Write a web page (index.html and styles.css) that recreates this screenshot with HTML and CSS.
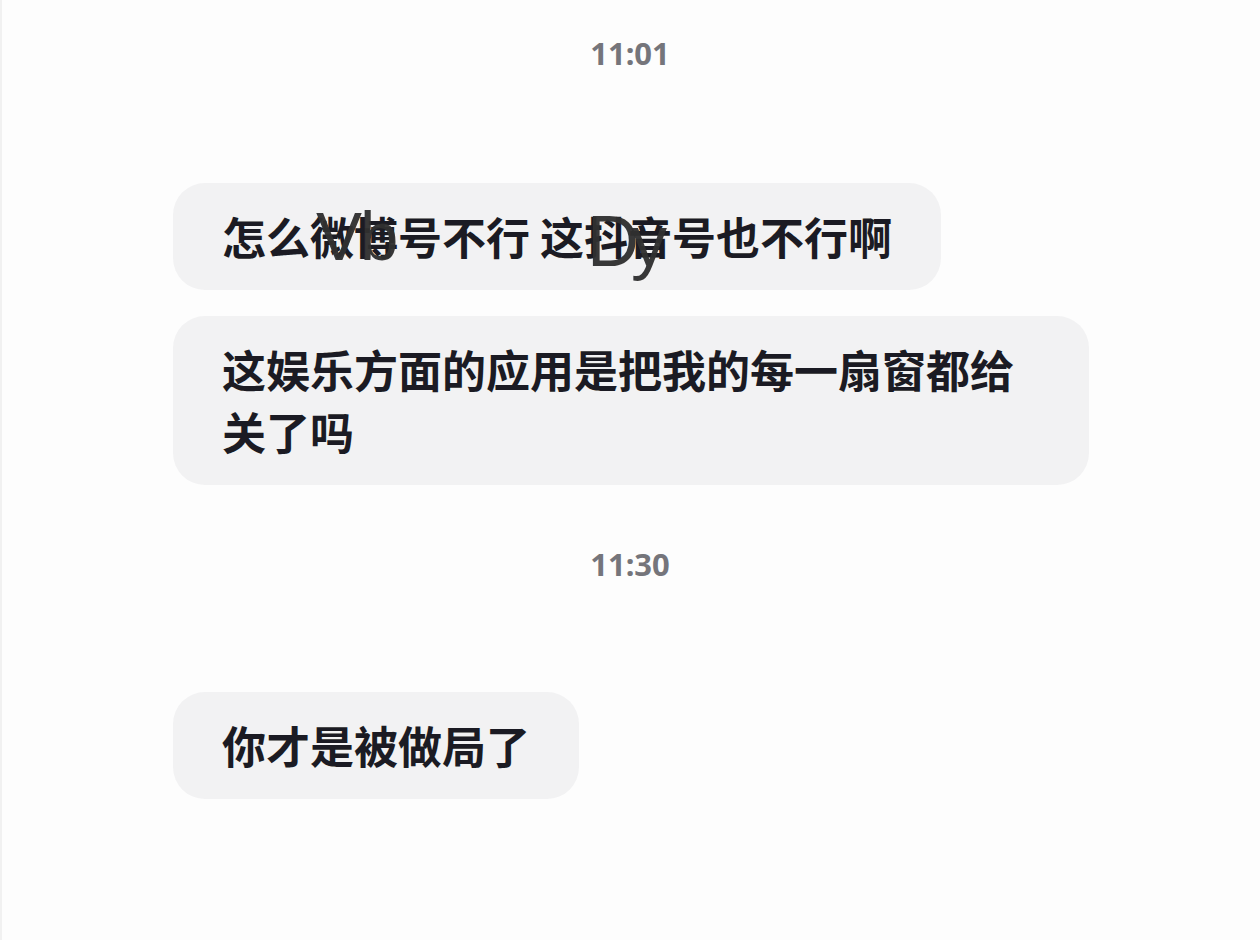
FILE: index.html
```html
<!DOCTYPE html>
<html lang="zh-CN">
<head>
<meta charset="utf-8">
<title>Chat</title>
<link rel="stylesheet" href="styles.css">
</head>
<body>
<div class="chat">
  <div class="time time-first">11:01</div>
  <div class="msgs">
    <div class="bubble overlay-host">怎么微博号不行 这抖音号也不行啊<span class="sticker sticker-vb">Vb</span><span class="sticker sticker-dy">Dy</span></div>
    <div class="bubble">这娱乐方面的应用是把我的每一扇窗都给关了吗</div>
  </div>
  <div class="time time-second">11:30</div>
  <div class="msgs msgs-last">
    <div class="bubble">你才是被做局了</div>
  </div>
</div>
</body>
</html>
```

FILE: styles.css
```css
html, body {
  margin: 0;
  padding: 0;
}
body {
  background: #fdfdfd;
  width: 1260px;
  height: 940px;
  overflow: hidden;
  border-left: 2px solid #f1f1f1;
  box-sizing: border-box;
}
.chat {
  display: flex;
  flex-direction: column;
}
.time {
  text-align: center;
  font-family: "Noto Sans", "Open Sans", sans-serif;
  font-weight: 700;
  font-size: 31px;
  line-height: 40px;
  color: #75757b;
  margin-left: -2px;
}
.time-first {
  margin-top: 33px;
}
.time-second {
  margin-top: 59px;
}
.msgs {
  display: flex;
  flex-direction: column;
  align-items: flex-start;
  gap: 26px;
  padding-left: 171px;
  margin-top: 110px;
}
.msgs-last {
  margin-top: 108px;
}
.bubble {
  background: #f2f2f3;
  border-radius: 32px;
  padding: 22px 49px 23px;
  max-width: 916px;
  box-sizing: border-box;
  font-family: "Noto Sans CJK SC", "Noto Sans", sans-serif;
  font-weight: 700;
  font-size: 44px;
  line-height: 62px;
  color: #1b1b23;
}
.overlay-host {
  position: relative;
}
.sticker {
  position: absolute;
  font-family: "Liberation Sans", Arial, sans-serif;
  font-weight: 400;
  font-size: 72px;
  line-height: 1;
  color: rgba(48, 48, 48, 0.96);
}
.sticker-vb {
  left: 143px;
  top: 19px;
  font-size: 69px;
  letter-spacing: -2px;
}
.sticker-dy {
  left: 414px;
  top: 22px;
  letter-spacing: -8px;
}
```
